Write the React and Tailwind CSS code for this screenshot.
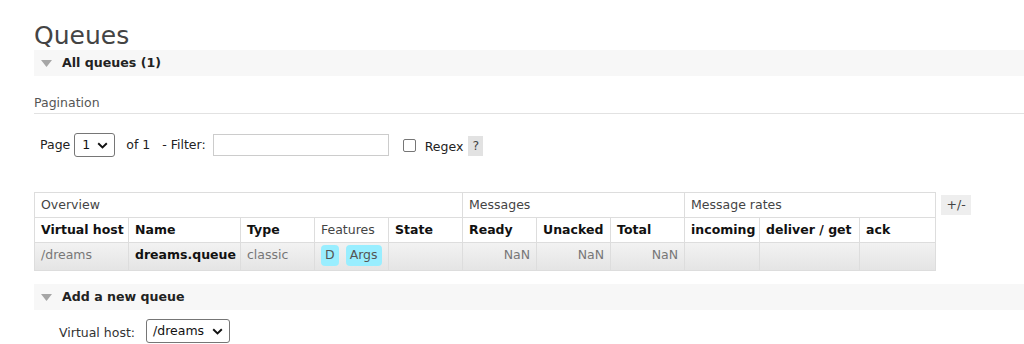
import React from "react";

const FONT = { fontFamily: '"DejaVu Sans", Verdana, sans-serif' };

function Tri() {
  return (
    <svg width="11" height="7" viewBox="0 0 11 7" className="shrink-0">
      <path d="M0 0 L11 0 L5.5 7 Z" fill="#a6a6a6" />
    </svg>
  );
}

function SectionBar({ title }) {
  return (
    <div className="h-[26px] bg-[#f7f7f7] flex items-center gap-[10px] pl-[7px]">
      <Tri />
      <span className="text-[12.6px] font-bold text-[#222]">{title}</span>
    </div>
  );
}

function Chevron() {
  return (
    <svg width="11" height="7" viewBox="0 0 11 7" className="shrink-0">
      <path d="M1.2 1.2 L5.5 5.4 L9.8 1.2" stroke="#111" strokeWidth="1.9" fill="none" />
    </svg>
  );
}

const cols = [94, 112, 74, 74, 74, 74, 74, 74, 75, 100, 76];
const heads = ["Virtual host", "Name", "Type", "Features", "State", "Ready", "Unacked", "Total", "incoming", "deliver / get", "ack"];

export default function App() {
  return (
    <div className="w-[1024px] h-[344px] overflow-hidden bg-white pl-[34px] text-[#484848]" style={FONT}>
      {/* Title */}
      <h1 className="text-[25px] leading-[28px] pt-[22px] text-[#444] font-normal">Queues</h1>

      <SectionBar title="All queues (1)" />

      {/* Pagination */}
      <div className="mt-[19px] text-[12.5px] leading-[15px] pb-[3px] border-b border-[#e2e2e2] text-[#555]">
        Pagination
      </div>

      <div className="flex items-center h-[24px] mt-[19px] text-[12.5px] text-[#222]">
        <span className="ml-[6px]">Page</span>
        <div className="ml-[4px] w-[41px] h-[24px] border border-[#767676] rounded-[3px] flex items-center justify-between pl-[7px] pr-[6px] text-[#111]">
          <span>1</span>
          <Chevron />
        </div>
        <span className="ml-[11px]">of 1</span>
        <span className="ml-[12px]">- Filter:</span>
        <div className="ml-[7px] w-[176px] h-[22px] border border-[#ccc]" />
        <div className="ml-[14px] w-[13px] h-[13px] border border-[#767676] rounded-[2px]" />
        <span className="ml-[9px] mt-[4px]">Regex</span>
        <span className="ml-[5px] mt-[2px] h-[20px] w-[15px] bg-[#e2e2e2] flex items-center justify-center text-[12.5px] text-[#444]">?</span>
      </div>

      {/* Table */}
      <div className="flex items-start mt-[35px]">
        <table className="table-fixed border-collapse w-[901px] text-[12.5px]">
          <colgroup>
            {cols.map((w, i) => (
              <col key={i} style={{ width: w }} />
            ))}
          </colgroup>
          <thead>
            <tr className="h-[25px]">
              <th colSpan={5} className="border border-[#ddd] text-left font-normal px-[6px] text-[#444]">Overview</th>
              <th colSpan={3} className="border border-[#ddd] text-left font-normal px-[6px] text-[#444]">Messages</th>
              <th colSpan={3} className="border border-[#ddd] text-left font-normal px-[6px] text-[#444]">Message rates</th>
            </tr>
            <tr className="h-[25px]">
              {heads.map((h) => (
                <th
                  key={h}
                  className={`border border-[#ddd] text-left px-[6px] whitespace-nowrap ${
                    h === "Features" ? "font-normal text-[#444]" : "font-bold text-[#111]"
                  }`}
                >
                  {h}
                </th>
              ))}
            </tr>
          </thead>
          <tbody>
            <tr className="h-[28px] bg-gradient-to-b from-[#f2f2f2] to-[#e4e4e4] align-top">
              <td className="border border-[#ddd] px-[6px] pt-[3px] text-[#777]">/dreams</td>
              <td className="border border-[#ddd] px-[6px] pt-[3px] font-bold text-[#111] whitespace-nowrap">dreams.queue</td>
              <td className="border border-[#ddd] px-[6px] pt-[3px] text-[#777]">classic</td>
              <td className="border border-[#ddd] px-[6px] pt-[2px]">
                <div className="flex gap-[7px]">
                  <span className="bg-[#99eeff] rounded-[4px] px-[4px] h-[21px] flex items-center text-[#555]">D</span>
                  <span className="bg-[#99eeff] rounded-[4px] px-[4px] h-[21px] flex items-center text-[#555]">Args</span>
                </div>
              </td>
              <td className="border border-[#ddd]" />
              <td className="border border-[#ddd] px-[6px] pt-[3px] text-right text-[#777]">NaN</td>
              <td className="border border-[#ddd] px-[6px] pt-[3px] text-right text-[#777]">NaN</td>
              <td className="border border-[#ddd] px-[6px] pt-[3px] text-right text-[#777]">NaN</td>
              <td className="border border-[#ddd]" />
              <td className="border border-[#ddd]" />
              <td className="border border-[#ddd]" />
            </tr>
          </tbody>
        </table>
        <div className="ml-[5px] mt-[3px] w-[30px] h-[20px] bg-[#eee] flex items-center justify-center text-[12.5px] text-[#444]">
          +/-
        </div>
      </div>

      <div className="mt-[13px]">
        <SectionBar title="Add a new queue" />
      </div>

      <div className="flex items-center mt-[9px] text-[12.5px] text-[#333]">
        <span className="ml-[25px] mt-[4px]">Virtual host:</span>
        <div className="ml-[11px] w-[84px] h-[24px] border border-[#767676] rounded-[3px] flex items-center justify-between pl-[6px] pr-[6px] text-[#111]">
          <span>/dreams</span>
          <Chevron />
        </div>
      </div>
    </div>
  );
}
